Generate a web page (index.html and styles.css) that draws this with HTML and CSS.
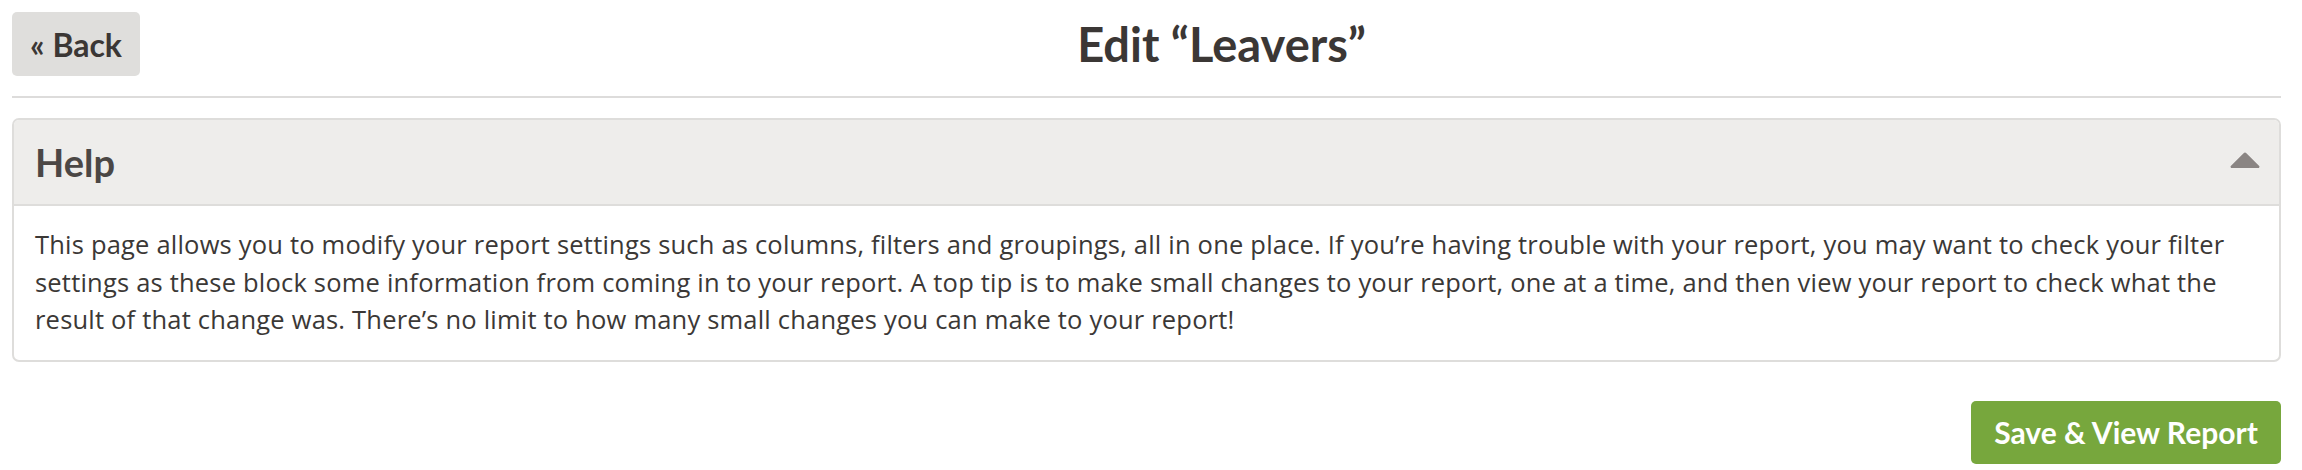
FILE: index.html
```html
<!DOCTYPE html>
<html lang="en">
<head>
<meta charset="utf-8">
<title>Edit “Leavers”</title>
<link rel="stylesheet" href="styles.css">
</head>
<body>
<div class="page">
  <div class="topbar">
    <a class="btn-back" href="#">« Back</a>
    <h1 class="title">Edit “Leavers”</h1>
  </div>
  <hr class="divider">
  <section class="panel">
    <div class="panel-header">
      <h2 class="panel-title">Help</h2>
      <svg class="caret" width="30" height="16" viewBox="0 0 30 16" aria-hidden="true">
        <path d="M13.6 1.2 Q15 -0.2 16.4 1.2 L29.2 14 Q30 15 28.8 16 L1.2 16 Q0 15 0.8 14 Z" fill="#8a8583"/>
      </svg>
    </div>
    <div class="panel-body">
      <p class="help-text">This page allows you to modify your report settings such as columns, filters and groupings, all in one place. If you’re having trouble with your report, you may want to check your filter settings as these block some information from coming in to your report. A top tip is to make small changes to your report, one at a time, and then view your report to check what the result of that change was. There’s no limit to how many small changes you can make to your report!</p>
    </div>
  </section>
  <div class="actions">
    <a class="btn-save" href="#">Save &amp; View Report</a>
  </div>
</div>
</body>
</html>
```

FILE: styles.css
```css
html, body {
  margin: 0;
  padding: 0;
  background: #ffffff;
}

body {
  font-family: Lato, "Open Sans", sans-serif;
  color: #3b3836;
}

.page {
  padding: 12px 21px 0 12px;
}

.topbar {
  display: flex;
  align-items: center;
  height: 64px;
}

.btn-back {
  display: flex;
  align-items: center;
  justify-content: center;
  width: 128px;
  height: 64px;
  box-sizing: border-box;
  background: #dfdedc;
  border-radius: 5px;
  color: #3b3735;
  font-weight: 700;
  font-size: 32px;
  text-decoration: none;
}

.title {
  flex: 1;
  margin: 0;
  padding-left: 22px;
  text-align: center;
  font-size: 47px;
  font-weight: 700;
  color: #3b3735;
}

.divider {
  margin: 20px 0 0;
  border: 0;
  height: 2px;
  background: #dddcdb;
}

.panel {
  margin-top: 20px;
  border: 2px solid #dedddb;
  border-radius: 7px;
  overflow: hidden;
}

.panel-header {
  display: flex;
  align-items: center;
  justify-content: space-between;
  height: 84px;
  padding: 0 19px 0 21px;
  background: #eeedeb;
  border-bottom: 2px solid #dedddb;
}

.panel-title {
  margin: 0;
  font-size: 38px;
  font-weight: 700;
  color: #4b4745;
}

.caret {
  display: block;
  margin-top: -5px;
}

.panel-body {
  padding: 20px 21px 21px;
}

.help-text {
  margin: 0;
  font-family: "Open Sans", Lato, sans-serif;
  font-size: 25.5px;
  letter-spacing: 0.2px;
  line-height: 37.5px;
  color: #3b3836;
}

.actions {
  display: flex;
  justify-content: flex-end;
  margin-top: 39px;
}

.btn-save {
  display: flex;
  align-items: center;
  justify-content: center;
  width: 310px;
  height: 63px;
  background: #77a73d;
  border-radius: 5px;
  color: #ffffff;
  font-weight: 700;
  font-size: 30px;
  text-decoration: none;
}
```
